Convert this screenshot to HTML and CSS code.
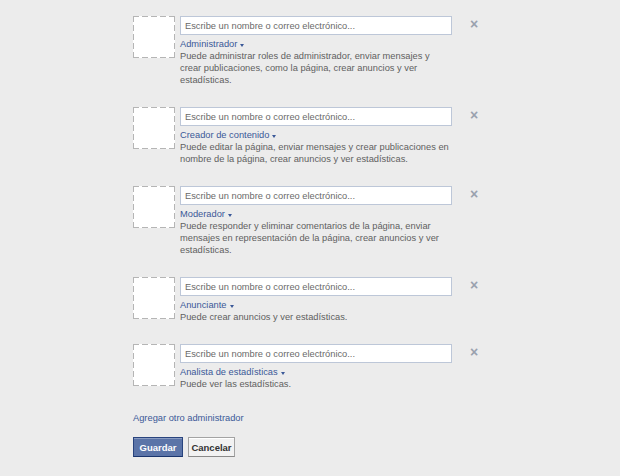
FILE: index.html
```html
<!DOCTYPE html>
<html lang="es">

<head>
    <meta charset="UTF-8">
    <title>Roles de la página</title>
    <link rel="stylesheet" href="styles.css">
</head>

<body>
    <div class="roles">
        <div class="role-row">
            <div class="pic"></div>
            <div class="role-body">
                <input class="who" type="text" placeholder="Escribe un nombre o correo electrónico...">
                <a class="role-name" href="#">Administrador <span class="caret"></span></a>
                <p class="role-desc">Puede administrar roles de administrador, enviar mensajes y crear publicaciones, como la página, crear anuncios y ver estadísticas.</p>
            </div>
            <span class="remove">&times;</span>
        </div>
        <div class="role-row">
            <div class="pic"></div>
            <div class="role-body">
                <input class="who" type="text" placeholder="Escribe un nombre o correo electrónico...">
                <a class="role-name" href="#">Creador de contenido <span class="caret"></span></a>
                <p class="role-desc">Puede editar la página, enviar mensajes y crear publicaciones en nombre de la página, crear anuncios y ver estadísticas.</p>
            </div>
            <span class="remove">&times;</span>
        </div>
        <div class="role-row">
            <div class="pic"></div>
            <div class="role-body">
                <input class="who" type="text" placeholder="Escribe un nombre o correo electrónico...">
                <a class="role-name" href="#">Moderador <span class="caret"></span></a>
                <p class="role-desc">Puede responder y eliminar comentarios de la página, enviar mensajes en representación de la página, crear anuncios y ver estadísticas.</p>
            </div>
            <span class="remove">&times;</span>
        </div>
        <div class="role-row">
            <div class="pic"></div>
            <div class="role-body">
                <input class="who" type="text" placeholder="Escribe un nombre o correo electrónico...">
                <a class="role-name" href="#">Anunciante <span class="caret"></span></a>
                <p class="role-desc">Puede crear anuncios y ver estadísticas.</p>
            </div>
            <span class="remove">&times;</span>
        </div>
        <div class="role-row">
            <div class="pic"></div>
            <div class="role-body">
                <input class="who" type="text" placeholder="Escribe un nombre o correo electrónico...">
                <a class="role-name" href="#">Analista de estadísticas <span class="caret"></span></a>
                <p class="role-desc">Puede ver las estadísticas.</p>
            </div>
            <span class="remove">&times;</span>
        </div>

        <a class="add-more" href="#">Agregar otro administrador</a>

        <div class="actions">
            <button class="btn btn-save">Guardar</button>
            <button class="btn btn-cancel">Cancelar</button>
        </div>
    </div>
</body>

</html>
```

FILE: styles.css
```css
* {
    margin: 0;
    padding: 0;
    box-sizing: border-box;
}

body {
    background-color: #ececec;
    font-family: "Liberation Sans", Arial, sans-serif;
    font-size: 9.3px;
    color: #555;
}

a {
    color: #3b5998;
    text-decoration: none;
}

.roles {
    padding: 16px 0 0 133px;
    display: flex;
    flex-direction: column;
    align-items: flex-start;
}

.role-row {
    display: flex;
    align-items: flex-start;
    margin-bottom: 21px;
}

/* dashed frame with long dashes, like the original */
.pic {
    width: 42px;
    height: 42px;
    flex-shrink: 0;
    background:
        repeating-linear-gradient(90deg, #b5b5b5 0 6px, transparent 6px 9px) top left / 100% 1px no-repeat,
        repeating-linear-gradient(90deg, #b5b5b5 0 6px, transparent 6px 9px) bottom left / 100% 1px no-repeat,
        repeating-linear-gradient(180deg, #b5b5b5 0 6px, transparent 6px 9px) top left / 1px 100% no-repeat,
        repeating-linear-gradient(180deg, #b5b5b5 0 6px, transparent 6px 9px) top right / 1px 100% no-repeat,
        #fff;
}

.role-body {
    width: 272px;
    margin-left: 5px;
    display: flex;
    flex-direction: column;
    align-items: flex-start;
}

.who {
    width: 272px;
    height: 19px;
    border: 1px solid #bdc7d8;
    background-color: #fff;
    padding: 0 4px;
    font-family: inherit;
    font-size: 9.3px;
    color: #333;
    outline: none;
}

.who::placeholder {
    color: #6a6a6a;
}

.role-name {
    margin-top: 3px;
    line-height: 12px;
    display: flex;
    align-items: center;
}

.caret {
    display: inline-block;
    margin-left: 3px;
    margin-top: 2px;
    border-left: 2.5px solid transparent;
    border-right: 2.5px solid transparent;
    border-top: 3px solid #3b5998;
}

.role-desc {
    width: 269px;
    line-height: 12px;
    color: #5f5f5f;
}

.remove {
    margin-left: 18px;
    margin-top: 1px;
    font-size: 14px;
    font-weight: bold;
    line-height: 14px;
    color: #9aa1ae;
}

.add-more {
    margin-top: 1px;
    line-height: 12px;
}

.actions {
    margin-top: 13px;
    display: flex;
    gap: 5px;
}

.btn {
    height: 20px;
    padding: 0;
    font-family: inherit;
    font-size: 9.5px;
    font-weight: bold;
    border: 1px solid;
}

.btn-save {
    width: 50px;
    background-color: #5b74a8;
    border-color: #29447e #29447e #1a356e;
    color: #fff;
    box-shadow: inset 0 1px 0 #8a9cc2;
}

.btn-cancel {
    width: 47px;
    background-color: #f2f2f2;
    border-color: #a3a3a3 #a3a3a3 #8a8a8a;
    color: #333;
    box-shadow: inset 0 1px 0 #fff;
}
```
